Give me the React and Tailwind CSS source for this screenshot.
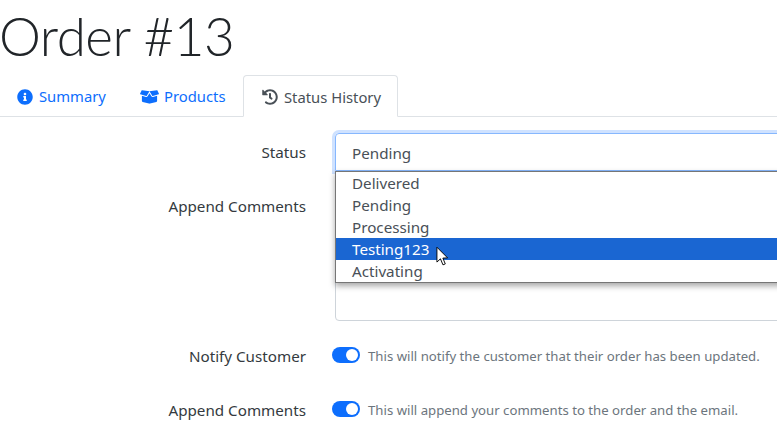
import React from "react";

function InfoIcon() {
  return (
    <svg viewBox="0 0 512 512" className="w-4 h-4 shrink-0" fill="#0d6efd">
      <path d="M256 8C119 8 8 119 8 256s111 248 248 248 248-111 248-248S393 8 256 8zm0 110c23.2 0 42 18.8 42 42s-18.8 42-42 42-42-18.8-42-42 18.8-42 42-42zm56 254c0 6.600-5.400 12-12 12h-88c-6.600 0-12-5.400-12-12v-24c0-6.600 5.400-12 12-12h12v-64h-12c-6.600 0-12-5.400-12-12v-24c0-6.600 5.400-12 12-12h64c6.600 0 12 5.400 12 12v100h12c6.600 0 12 5.400 12 12v24z" />
    </svg>
  );
}

function BoxOpenIcon() {
  return (
    <svg viewBox="0 0 640 512" className="w-[19px] h-[16px] shrink-0" fill="#0d6efd">
      <path d="M425.700 256c-16.900 0-32.800-9-41.400-23.400L320 126l-64.200 106.600c-8.700 14.500-24.600 23.500-41.500 23.500-4.500 0-9-.6-13.300-1.900L64 215v178c0 14.700 10 27.500 24.200 31l216.200 54.100c10.200 2.500 20.900 2.500 31 0L551.800 424c14.200-3.600 24.200-16.400 24.200-31V215l-137 39.100c-4.300 1.300-8.800 1.900-13.300 1.900zm212.600-112.200L586.800 41c-3.100-6.200-9.800-9.800-16.700-8.900L320 64l91.700 152.100c3.800 6.300 11.400 9.300 18.500 7.300l197.900-56.500c9.900-2.900 14.700-13.900 10.200-23.100zM53.200 41L1.700 143.800c-4.600 9.200.3 20.200 10.100 23l197.900 56.500c7.100 2 14.700-1 18.500-7.300L320 64 69.800 32.100c-6.900-.8-13.500 2.700-16.600 8.900z" />
    </svg>
  );
}

function HistoryIcon() {
  return (
    <svg viewBox="0 0 512 512" className="w-4 h-4 shrink-0" fill="#495057">
      <path d="M504 255.500c.3 136.600-111.100 248.400-247.700 248.500-59 0-113.200-20.500-155.800-54.900-11.100-8.900-11.900-25.500-1.800-35.600l11.300-11.300c8.600-8.600 22.400-9.600 31.900-2C173.100 425.100 212.800 440 256 440c101.700 0 184-82.300 184-184 0-101.700-82.300-184-184-184-48.800 0-93.100 19-126.100 49.900l50.800 50.800c10.100 10.100 2.900 27.300-11.300 27.300H24c-8.800 0-16-7.200-16-16V38.600c0-14.300 17.200-21.400 27.300-11.300l49.400 49.400C129.200 34.100 189.600 8 256 8c136.700 0 247.700 110.800 248 247.500zm-180.900 78.800l9.800-12.600c8.100-10.500 6.300-25.500-4.200-33.700L288 256.300V152c0-13.300-10.700-24-24-24h-16c-13.300 0-24 10.700-24 24v135.700l65.400 50.900c10.500 8.100 25.500 6.300 33.700-4.300z" />
    </svg>
  );
}

function Toggle() {
  return (
    <div className="w-7 h-4 rounded-full bg-[#0d6efd] flex items-center justify-end pr-[2px] shrink-0">
      <div className="w-3 h-3 rounded-full bg-white" />
    </div>
  );
}

function Cursor() {
  return (
    <svg viewBox="0 0 14 22" className="absolute left-[100px] top-[74px] w-[13px] h-[21px]">
      <path d="M1 1 L1 17 L4.800 13.500 L7.500 20 L10 19 L7.400 12.700 L12.500 12.500 Z" fill="#fff" stroke="#000" strokeWidth="1" strokeLinejoin="round" />
    </svg>
  );
}

export default function App() {
  const options = ["Delivered", "Pending", "Processing", "Testing123", "Activating"];
  return (
    <div className="w-[777px] h-[445px] overflow-hidden bg-white font-['Noto_Sans','Open_Sans',sans-serif] text-[#343a40]">
      <h1 className="h-[75px] text-[53px] leading-[71px] tracking-[-0.5px] font-light text-[#212529] font-['Lato',sans-serif] -ml-[1px]">Order #13</h1>
      <div className="flex h-[42px] border-b border-[#dee2e6] text-[14.800px] text-[#0d6efd]">
        <div className="w-[122px] flex items-center gap-[6px] pl-[17px] pt-[2px]"><InfoIcon /><span>Summary</span></div>
        <div className="w-[121px] flex items-center gap-[5px] pl-[18px] pt-[2px]"><BoxOpenIcon /><span>Products</span></div>
        <div className="w-[155px] h-[42px] flex items-center gap-[6px] pl-[18px] pt-[2px] text-[#495057] bg-white border border-[#dee2e6] border-b-white rounded-t-[4px]"><HistoryIcon /><span>Status History</span></div>
      </div>
      <div className="grid grid-cols-[306px_1fr] gap-x-[29px] pt-[16px] text-[15.200px]">
        <div className="text-right pt-[7px] leading-[24px]">Status</div>
        <div className="relative w-[460px]">
          <div className="h-[38px] pt-[2px] border border-[#86b7fe] rounded-t-[4px] shadow-[0_0_0_3px_#cfe2ff] pl-[16px] flex items-center text-[#495057]">Pending</div>
          <div className="absolute left-0 top-[38px] w-[460px] h-[112px] border border-[#767676] bg-white shadow-[0_3px_6px_rgba(0,0,0,0.35)] z-10 text-[#495057]">
            {options.map((o) => (
              <div key={o} className={o === "Testing123" ? "h-[22px] leading-[22px] pl-[16px] bg-[#1a66d2] text-white" : "h-[22px] leading-[22px] pl-[16px]"}>{o}</div>
            ))}
            <Cursor />
          </div>
        </div>
        <div className="text-right pt-[23px] leading-[24px]">Append Comments</div>
        <div className="pt-[16px]">
          <div className="h-[134px] w-[460px] border border-[#ced4da] rounded-[4px]" />
        </div>
        <div className="text-right pt-[23px] leading-[24px]">Notify Customer</div>
        <div className="pt-[26px] -ml-[3px] flex items-start gap-[8px] text-[13.200px] text-[#6c757d] leading-[16px]"><Toggle /><span className="pt-[1px]">This will notify the customer that their order has been updated.</span></div>
        <div className="text-right pt-[30px] leading-[24px]">Append Comments</div>
        <div className="pt-[33px] -ml-[3px] flex items-start gap-[8px] text-[13.200px] text-[#6c757d] leading-[16px]"><Toggle /><span className="pt-[1px]">This will append your comments to the order and the email.</span></div>
      </div>
    </div>
  );
}
